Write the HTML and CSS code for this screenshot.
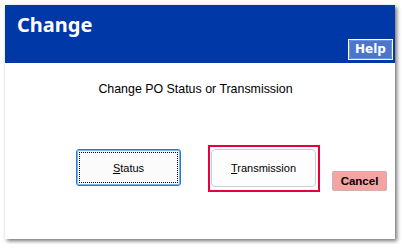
FILE: index.html
```
<!DOCTYPE html>
<html>
<head>
<meta charset="utf-8">
<link rel="stylesheet" href="styles.css">
</head>
<body>
<div class="window">
  <div class="header">
    <div class="title">Change</div>
    <button class="help">Help</button>
  </div>
  <div class="content">
    <p class="prompt">Change PO Status or Transmission</p>
    <div class="actions">
      <button class="btn status"><u>S</u>tatus</button>
      <div class="highlight">
        <button class="btn transmission"><u>T</u>ransmission</button>
      </div>
      <button class="cancel">Cancel</button>
    </div>
  </div>
</div>
</body>
</html>
```
FILE: styles.css
```
html, body {
  margin: 0;
  padding: 0;
  background: #ffffff;
}
body {
  padding: 5px;
  font-family: "Liberation Sans", Arial, sans-serif;
}
.window {
  width: 390px;
  height: 234px;
  background: #ffffff;
  box-shadow: 2px 2px 4px rgba(0, 0, 0, 0.55);
  display: flex;
  flex-direction: column;
}
.header {
  height: 58px;
  background: #0038a8;
  display: flex;
  justify-content: space-between;
  align-items: flex-start;
  box-sizing: border-box;
  padding: 0 2px 3px 12px;
}
.title {
  font-family: "Noto Sans", sans-serif;
  font-weight: bold;
  font-size: 20px;
  line-height: 28px;
  margin-top: 6px;
  color: #ffffff;
}
.help {
  align-self: flex-end;
  width: 45px;
  height: 21px;
  padding: 0;
  margin: 0;
  background: #4b76c9;
  border: 1px solid #ffffff;
  box-shadow: inset 0 0 0 1px #4b76c9;
  border-radius: 0;
  color: #ffffff;
  font-family: "DejaVu Sans", sans-serif;
  font-weight: bold;
  font-size: 12px;
  line-height: 17px;
  position: relative;
}
.help::before {
  content: "";
  position: absolute;
  inset: 0;
  border: 1px solid #6f92d6;
  border-radius: 3px;
}
.content {
  flex: 1;
  display: flex;
  flex-direction: column;
}
.prompt {
  margin: 19px 0 0 0;
  padding-right: 9px;
  text-align: center;
  font-size: 12.4px;
  line-height: 14px;
  color: #000000;
}
.actions {
  display: flex;
  align-items: flex-start;
  padding-left: 71px;
  margin-top: 49px;
}
.btn {
  margin: 0;
  padding: 0;
  font-family: "Liberation Sans", Arial, sans-serif;
  font-size: 11px;
  color: #000000;
}
.status {
  width: 105px;
  height: 37px;
  margin-top: 4px;
  background: #fbfbfb;
  border: 1px solid #1c7bd6;
  box-shadow: inset 0 0 0 1px #7ab6ee;
  border-radius: 3px;
  outline: 1px dotted #000000;
  outline-offset: -4px;
}
.highlight {
  margin-left: 27px;
  width: 112px;
  height: 47px;
  box-sizing: border-box;
  border: 2px solid #e8003d;
  padding: 2px 0 0 1px;
}
.transmission {
  width: 105px;
  height: 38px;
  background: #fdfdfd;
  border: 1px solid #cfcfcf;
  border-radius: 4px;
}
.cancel {
  margin: 26px 0 0 12px;
  width: 55px;
  height: 20px;
  padding: 0;
  background: #f5a3a3;
  border: 1px solid #c8b4b4;
  border-top-color: #b8b8b8;
  border-radius: 2px;
  font-family: "Liberation Sans", Arial, sans-serif;
  font-weight: bold;
  font-size: 11.5px;
  color: #000000;
}
```
